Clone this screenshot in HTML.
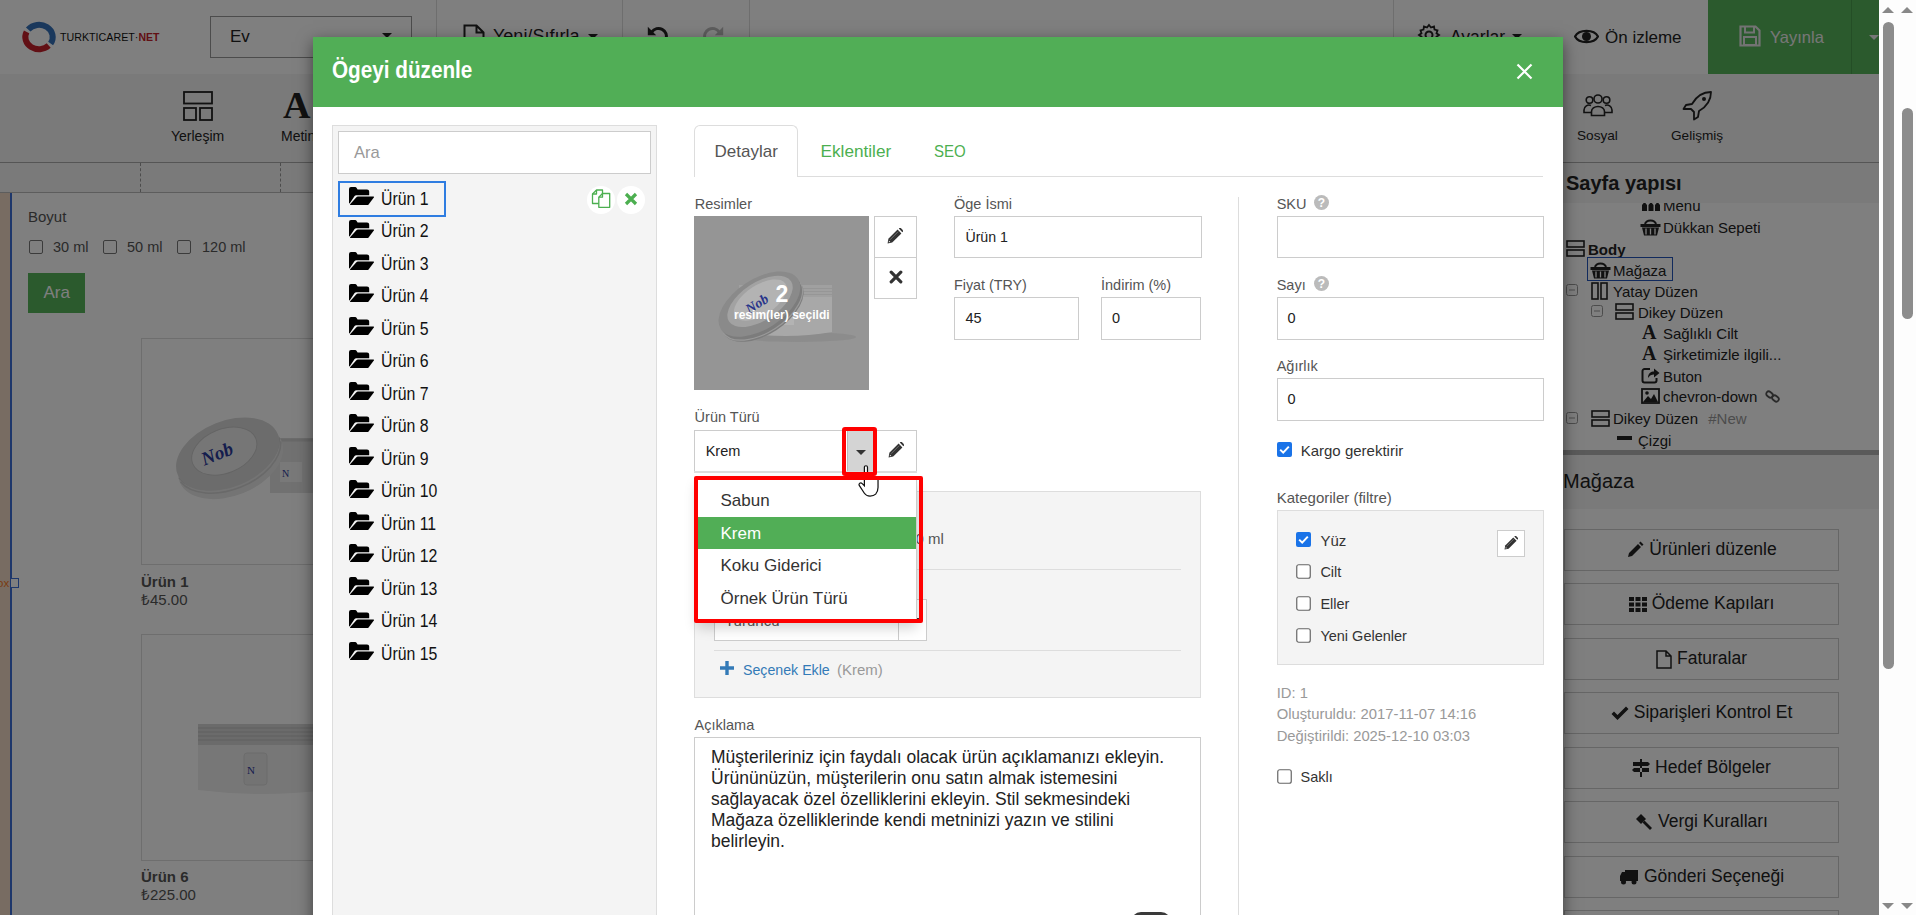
<!DOCTYPE html>
<html><head><meta charset="utf-8">
<style>
*{box-sizing:border-box;margin:0;padding:0}
html,body{width:1916px;height:915px;overflow:hidden;background:#fff;font-family:"Liberation Sans",sans-serif;color:#333}
.a{position:absolute}
.tx{line-height:1;white-space:nowrap}
svg{display:block}
</style></head><body>
<div class="a" style="left:0;top:0;width:1879px;height:915px;background:#fff;overflow:hidden">
<div class="a" style="left:0px;top:0px;width:1879px;height:74px;background:#fff"></div>
<div class="a" style="left:0px;top:74px;width:1879px;height:88px;background:#f4f4f4"></div>
<div class="a" style="left:0px;top:162px;width:1879px;height:1px;background:#aaa"></div>
<div class="a" style="left:0px;top:163px;width:1879px;height:29px;background:#f4f4f4"></div>
<div class="a" style="left:0px;top:192px;width:1879px;height:1px;background:#bbb"></div>
<div class="a" style="left:140px;top:163px;width:0px;height:29px;border-left:1px dashed #999"></div>
<div class="a" style="left:280px;top:163px;width:0px;height:29px;border-left:1px dashed #999"></div>
<svg class="a" style="left:18px;top:18px;" width="42" height="40" viewBox="0 0 42 40"><path d="M10.2 11.5 A13.7 12.2 0 0 1 32.6 25.5" fill="none" stroke="#3470b8" stroke-width="6"/><path d="M8.6 13.8 A13.7 12.2 0 0 0 30.7 27.6" fill="none" stroke="#c4202a" stroke-width="6"/></svg>
<div class="a tx" style="left:60px;top:31.9px;font-size:10.7px;color:#111;">TURKTICARET·<span style="color:#c4202a;font-weight:bold;font-size:10.5px">NET</span></div>
<div class="a" style="left:210px;top:16px;width:202px;height:42px;border:1px solid #999;background:#fff"></div>
<div class="a tx" style="left:230px;top:28.2px;font-size:17px;color:#222;">Ev</div>
<div class="a" style="left:382px;top:33px;width:0px;height:0px;border-left:5px solid transparent;border-right:5px solid transparent;border-top:5px solid #222"></div>
<div class="a" style="left:436px;top:0px;width:1px;height:74px;background:#ddd"></div>
<svg class="a" style="left:463px;top:24px;" width="22" height="26" viewBox="0 0 22 26"><path d="M1.5 1.5h12l7 7v16h-19z M13.5 1.5v7h7" fill="none" stroke="#222" stroke-width="2"/></svg>
<div class="a tx" style="left:493px;top:26.8px;font-size:18px;color:#222;">Yeni/Sıfırla</div>
<div class="a" style="left:588px;top:34px;width:0px;height:0px;border-left:5px solid transparent;border-right:5px solid transparent;border-top:5px solid #222"></div>
<div class="a" style="left:622px;top:0px;width:1px;height:74px;background:#ddd"></div>
<svg class="a" style="left:646px;top:24px;" width="24" height="24" viewBox="0 0 24 24"><path d="M5.9 7.9 A8 8 0 0 1 20 15.2" fill="none" stroke="#222" stroke-width="3"/><path d="M1.8 2.8 L1.8 11.2 L10.2 11.2z" fill="#222"/></svg>
<svg class="a" style="left:701px;top:24px;" width="24" height="24" viewBox="0 0 24 24"><path d="M18.1 7.9 A8 8 0 0 0 4 15.2" fill="none" stroke="#bbb" stroke-width="3"/><path d="M22.2 2.8 L22.2 11.2 L13.8 11.2z" fill="#bbb"/></svg>
<div class="a" style="left:749px;top:0px;width:1px;height:74px;background:#ddd"></div>
<div class="a" style="left:1393px;top:0px;width:1px;height:74px;background:#ddd"></div>
<svg class="a" style="left:1417px;top:23px;" width="24" height="24" viewBox="0 0 24 24"><circle cx="12" cy="12" r="3.5" fill="none" stroke="#222" stroke-width="2"/><path d="M12 2l2 2.5 3-1 .5 3 3 .8-1 3 2.5 1.7-2.5 1.7 1 3-3 .8-.5 3-3-1L12 22l-2-2.5-3 1-.5-3-3-.8 1-3L2 12l2.5-1.7-1-3 3-.8.5-3 3 1z" fill="none" stroke="#222" stroke-width="1.8"/></svg>
<div class="a tx" style="left:1450px;top:28.6px;font-size:17.5px;color:#222;">Ayarlar</div>
<div class="a" style="left:1512px;top:34px;width:0px;height:0px;border-left:5px solid transparent;border-right:5px solid transparent;border-top:5px solid #222"></div>
<svg class="a" style="left:1574px;top:28px;" width="25" height="17" viewBox="0 0 25 17"><path d="M1 8.5 C5 1 20 1 24 8.5 C20 16 5 16 1 8.5z" fill="none" stroke="#222" stroke-width="2.2"/><circle cx="12.5" cy="8.5" r="4.5" fill="#222"/></svg>
<div class="a tx" style="left:1605px;top:29.0px;font-size:17px;color:#222;">Ön izleme</div>
<div class="a" style="left:1708px;top:0px;width:171px;height:74px;background:#56b45b"></div>
<div class="a" style="left:1851px;top:0px;width:1px;height:74px;background:#489c4c"></div>
<svg class="a" style="left:1739px;top:25px;" width="22" height="22" viewBox="0 0 22 22"><path d="M1.5 1.5h15l4 4v15h-19z" fill="none" stroke="#e6e6e6" stroke-width="2.2"/><path d="M6 1.5v6h9v-6" fill="none" stroke="#e6e6e6" stroke-width="2"/><rect x="5" y="12" width="12" height="8" fill="none" stroke="#e6e6e6" stroke-width="2"/></svg>
<div class="a tx" style="left:1770px;top:29.4px;font-size:16.5px;color:#eee;">Yayınla</div>
<div class="a" style="left:1869px;top:35px;width:0px;height:0px;border-left:5px solid transparent;border-right:5px solid transparent;border-top:5px solid #eee"></div>
<svg class="a" style="left:183px;top:91px;" width="30" height="30" viewBox="0 0 30 30"><rect x="1" y="1" width="28" height="11.5" fill="none" stroke="#222" stroke-width="1.8"/><rect x="1" y="17" width="12" height="12" fill="none" stroke="#222" stroke-width="1.8"/><rect x="17" y="17" width="12" height="12" fill="none" stroke="#222" stroke-width="1.8"/></svg>
<div class="a tx" style="left:171px;top:129.1px;font-size:14px;color:#222;">Yerleşim</div>
<div class="a tx" style="left:283px;top:85.8px;font-size:38px;color:#222;font-weight:bold;font-family:'Liberation Serif',serif;">A</div>
<div class="a tx" style="left:281px;top:129.1px;font-size:14px;color:#222;">Metin</div>
<svg class="a" style="left:1583px;top:93px;" width="30" height="24" viewBox="0 0 30 24"><g fill="none" stroke="#222" stroke-width="1.6"><circle cx="15" cy="6" r="4"/><circle cx="6.5" cy="7" r="3.3"/><circle cx="23.5" cy="7" r="3.3"/><path d="M8.5 22.5v-4a6.5 5 0 0 1 13 0v4z"/><path d="M8 12.5a5 5 0 0 0-7 4.5v2.5h7"/><path d="M22 12.5a5 5 0 0 1 7 4.5v2.5h-7"/></g></svg>
<div class="a tx" style="left:1577px;top:129.2px;font-size:13.6px;color:#222;">Sosyal</div>
<svg class="a" style="left:1682px;top:90px;" width="31" height="31" viewBox="0 0 31 31"><g fill="none" stroke="#222" stroke-width="1.8" stroke-linejoin="round"><path d="M29 2 C20 2 14 7 10 14 L4 15 L1.5 19 L9 19 L12 22 L12 29.5 L16 27 L17 21 C24 17 29 11 29 2z"/></g><circle cx="22" cy="9" r="2" fill="#222"/></svg>
<div class="a tx" style="left:1671px;top:129.2px;font-size:13.6px;color:#222;">Gelişmiş</div>
<div class="a" style="left:0px;top:193px;width:10px;height:722px;background:#f0d9c4"></div>
<div class="a" style="left:10px;top:193px;width:2px;height:722px;background:#3d6fd6"></div>
<div class="a tx" style="left:28px;top:209.3px;font-size:15px;color:#555;">Boyut</div>
<div class="a" style="left:29px;top:240px;width:14px;height:14px;border:1px solid #777;border-radius:2px;background:#fff"></div>
<div class="a tx" style="left:53px;top:240.2px;font-size:14.5px;color:#555;">30 ml</div>
<div class="a" style="left:103px;top:240px;width:14px;height:14px;border:1px solid #777;border-radius:2px;background:#fff"></div>
<div class="a tx" style="left:127px;top:240.2px;font-size:14.5px;color:#555;">50 ml</div>
<div class="a" style="left:177px;top:240px;width:14px;height:14px;border:1px solid #777;border-radius:2px;background:#fff"></div>
<div class="a tx" style="left:202px;top:240.2px;font-size:14.5px;color:#555;">120 ml</div>
<div class="a" style="left:28px;top:273px;width:57px;height:40px;background:#56b45b"></div>
<div class="a tx" style="left:43.5px;top:284.3px;font-size:17px;color:#fff;">Ara</div>
<div class="a" style="left:141px;top:338px;width:300px;height:227px;border:1px solid #ddd"></div>
<div class="a tx" style="left:141px;top:574.3px;font-size:15px;color:#555;font-weight:bold;">Ürün 1</div>
<div class="a tx" style="left:141px;top:591.9px;font-size:15px;color:#555;">₺45.00</div>
<div class="a" style="left:141px;top:634px;width:300px;height:227px;border:1px solid #ddd"></div>
<div class="a tx" style="left:141px;top:869.3px;font-size:15px;color:#555;font-weight:bold;">Ürün 6</div>
<div class="a tx" style="left:141px;top:887.3px;font-size:15px;color:#555;">₺225.00</div>
<div class="a tx" style="left:-3px;top:578.3px;font-size:11.5px;color:#f5761f;">ox</div>
<div class="a" style="left:10px;top:578px;width:9px;height:10px;border:1px solid #3d6fd6;background:#fff"></div>
<svg class="a" style="left:160px;top:400px;" width="160" height="110" viewBox="0 0 160 110"><rect x="110" y="38" width="50" height="55" fill="#e2e2e2"/><path d="M110 40 H160" stroke="#d0d0d0" stroke-width="3"/><rect x="120" y="62" width="22" height="20" fill="#f2f2f2"/><text x="122" y="77" font-family="Liberation Serif" font-size="10" fill="#2b3a9a">N</text><g transform="rotate(-22 68 55)"><ellipse cx="68" cy="62" rx="55" ry="34" fill="#e8e8e8"/><path d="M14 58 A55 34 0 0 0 122 58" fill="none" stroke="#cfcfcf" stroke-width="1.5"/><path d="M14 62 A55 34 0 0 0 122 62" fill="none" stroke="#d2d2d2" stroke-width="1.5"/><ellipse cx="68" cy="54" rx="54" ry="33" fill="#d9d9d9"/><ellipse cx="66" cy="50" rx="34" ry="22" fill="#ededed" stroke="#c9c9c9" stroke-width="1"/><text x="42" y="56" font-family="Liberation Serif" font-style="italic" font-weight="bold" font-size="19" fill="#2b3a9a">Nob</text></g></svg>
<svg class="a" style="left:196px;top:722px;" width="130" height="76" viewBox="0 0 130 76"><rect x="2" y="2" width="128" height="21" fill="#d6d6d6"/><path d="M2 6H130M2 10H130M2 14H130M2 18H130" stroke="#bdbdbd" stroke-width="1.2"/><path d="M2 23 H130 V68 Q66 76 2 68z" fill="#eeeeee"/><rect x="48" y="31" width="23" height="32" rx="3" fill="#e6e6e6" stroke="#d8d8d8"/><text x="51" y="52" font-family="Liberation Serif" font-size="11" fill="#2b3a9a">N</text></svg>
<div class="a" style="left:1545px;top:163px;width:334px;height:40px;background:#f4f4f4"></div>
<div class="a tx" style="left:1566px;top:172.9px;font-size:20px;color:#222;font-weight:bold;">Sayfa yapısı</div>
<div class="a" style="left:1545px;top:203px;width:334px;height:247px;overflow:hidden"><div class="a" style="left:-1545px;top:-203px;width:1879px;height:915px"><svg class="a" style="left:1641px;top:199px;" width="20" height="12" viewBox="0 0 20 12"><path d="M1 12v-6l2.5-3 2.5 3v6z M7.5 12v-6l2.5-3 2.5 3v6z M14 12v-6l2.5-3 2.5 3v6z" fill="#222"/></svg>
<div class="a tx" style="left:1663px;top:198.3px;font-size:15px;color:#222;">Menu</div>
<svg class="a" style="left:1640px;top:217px;" width="21" height="19" viewBox="0 0 21 19"><path d="M5 8 C5 2 16 2 16 8" fill="none" stroke="#222" stroke-width="2"/><rect x="0.5" y="7" width="20" height="3" fill="#222"/><path d="M2 10.5h17l-2 8h-13z" fill="#222"/><path d="M6 11.5v6 M10.5 11.5v6 M15 11.5v6" stroke="#fff" stroke-width="1.3"/></svg>
<div class="a tx" style="left:1663px;top:219.5px;font-size:15px;color:#222;">Dükkan Sepeti</div>
<svg class="a" style="left:1566px;top:240px;" width="19" height="17" viewBox="0 0 19 17"><rect x="1" y="1" width="17" height="6" fill="none" stroke="#222" stroke-width="1.6"/><rect x="1" y="10" width="17" height="6" fill="none" stroke="#222" stroke-width="1.6"/></svg>
<div class="a tx" style="left:1588px;top:241.5px;font-size:15px;color:#222;font-weight:bold;">Body</div>
<div class="a" style="left:1587px;top:257px;width:86px;height:24px;border:1.5px solid #2255bb"></div>
<svg class="a" style="left:1590px;top:260px;" width="21" height="19" viewBox="0 0 21 19"><path d="M5 8 C5 2 16 2 16 8" fill="none" stroke="#222" stroke-width="2"/><rect x="0.5" y="7" width="20" height="3" fill="#222"/><path d="M2 10.5h17l-2 8h-13z" fill="#222"/><path d="M6 11.5v6 M10.5 11.5v6 M15 11.5v6" stroke="#fff" stroke-width="1.3"/></svg>
<div class="a tx" style="left:1613px;top:262.8px;font-size:15px;color:#222;">Mağaza</div>
<svg class="a" style="left:1566px;top:284px;" width="12" height="12" viewBox="0 0 12 12"><rect x="0.5" y="0.5" width="11" height="11" rx="2" fill="none" stroke="#999" stroke-width="1"/><path d="M3 6h6" stroke="#999" stroke-width="1"/></svg>
<svg class="a" style="left:1591px;top:282px;" width="17" height="18" viewBox="0 0 17 18"><rect x="1" y="1" width="6" height="16" fill="none" stroke="#222" stroke-width="1.6"/><rect x="10" y="1" width="6" height="16" fill="none" stroke="#222" stroke-width="1.6"/></svg>
<div class="a tx" style="left:1613px;top:283.5px;font-size:15px;color:#222;">Yatay Düzen</div>
<svg class="a" style="left:1591px;top:305px;" width="12" height="12" viewBox="0 0 12 12"><rect x="0.5" y="0.5" width="11" height="11" rx="2" fill="none" stroke="#999" stroke-width="1"/><path d="M3 6h6" stroke="#999" stroke-width="1"/></svg>
<svg class="a" style="left:1615px;top:303px;" width="19" height="17" viewBox="0 0 19 17"><rect x="1" y="1" width="17" height="6" fill="none" stroke="#222" stroke-width="1.6"/><rect x="1" y="10" width="17" height="6" fill="none" stroke="#222" stroke-width="1.6"/></svg>
<div class="a tx" style="left:1638px;top:304.8px;font-size:15px;color:#222;">Dikey Düzen</div>
<div class="a tx" style="left:1642px;top:321.9px;font-size:20px;color:#222;font-weight:bold;font-family:'Liberation Serif',serif;">A</div>
<div class="a tx" style="left:1663px;top:326.1px;font-size:15px;color:#222;">Sağlıklı Cilt</div>
<div class="a tx" style="left:1642px;top:343.1px;font-size:20px;color:#222;font-weight:bold;font-family:'Liberation Serif',serif;">A</div>
<div class="a tx" style="left:1663px;top:347.3px;font-size:15px;color:#222;">Şirketimizle ilgili...</div>
<svg class="a" style="left:1641px;top:366px;" width="19" height="18" viewBox="0 0 19 18"><path d="M9 3H3.5a2 2 0 0 0-2 2v9.5a2 2 0 0 0 2 2h10a2 2 0 0 0 2-2V12" fill="none" stroke="#222" stroke-width="2"/><path d="M7 12 C7 7 10 5.5 13 5.5 V2.5 L18.5 7 L13 11.5 V8.5 C10.5 8.5 8.5 9.5 7 12z" fill="#222"/></svg>
<div class="a tx" style="left:1663px;top:368.8px;font-size:15px;color:#222;">Buton</div>
<svg class="a" style="left:1641px;top:388px;" width="19" height="16" viewBox="0 0 19 16"><rect x="1" y="1" width="17" height="14" fill="none" stroke="#222" stroke-width="1.8"/><path d="M2 14 L7 8 L10 11 L13 6 L17 14z" fill="#222"/><circle cx="6" cy="5" r="1.8" fill="#222"/></svg>
<div class="a tx" style="left:1663px;top:389.3px;font-size:15px;color:#222;">chevron-down</div>
<svg class="a" style="left:1765px;top:389px;" width="15" height="15" viewBox="0 0 15 15"><g fill="none" stroke="#555" stroke-width="1.8"><rect x="1" y="3" width="7" height="5" rx="2.5" transform="rotate(40 4.5 5.5)"/><rect x="7" y="7" width="7" height="5" rx="2.5" transform="rotate(40 10.5 9.5)"/></g></svg>
<svg class="a" style="left:1566px;top:412px;" width="12" height="12" viewBox="0 0 12 12"><rect x="0.5" y="0.5" width="11" height="11" rx="2" fill="none" stroke="#999" stroke-width="1"/><path d="M3 6h6" stroke="#999" stroke-width="1"/></svg>
<svg class="a" style="left:1591px;top:410px;" width="19" height="17" viewBox="0 0 19 17"><rect x="1" y="1" width="17" height="6" fill="none" stroke="#222" stroke-width="1.6"/><rect x="1" y="10" width="17" height="6" fill="none" stroke="#222" stroke-width="1.6"/></svg>
<div class="a tx" style="left:1613px;top:411.4px;font-size:15px;color:#222;">Dikey Düzen <span style="color:#999;margin-left:6px">#New</span></div>
<div class="a" style="left:1617px;top:436px;width:15px;height:4px;background:#222"></div>
<div class="a tx" style="left:1638px;top:432.7px;font-size:15px;color:#222;">Çizgi</div>
</div></div>
<div class="a" style="left:1545px;top:450px;width:334px;height:5px;background:#b5b5b5"></div>
<div class="a" style="left:1545px;top:455px;width:334px;height:54px;background:#f4f4f4"></div>
<div class="a tx" style="left:1563px;top:471.1px;font-size:20px;color:#222;">Mağaza</div>
<div class="a" style="left:1564px;top:529px;width:275px;height:42px;border:1px solid #ccc;background:#fff;display:flex;align-items:center;justify-content:center;gap:5px;font-size:17.5px;color:#222;line-height:1"><svg width="18" height="18" viewBox="0 0 18 18"><path d="M2 16 L3 12 L12 3 L15 6 L6 15z M13 2 L14.5 0.5 L17.5 3.5 L16 5z" fill="#222"/></svg><span>Ürünleri düzenle</span></div>
<div class="a" style="left:1564px;top:583px;width:275px;height:42px;border:1px solid #ccc;background:#fff;display:flex;align-items:center;justify-content:center;gap:5px;font-size:17.5px;color:#222;line-height:1"><svg width="18" height="16" viewBox="0 0 18 16"><path d="M0 1h5v4h-5z M6.5 1h5v4h-5z M13 1h5v4h-5z M0 6.5h5v4h-5z M6.5 6.5h5v4h-5z M13 6.5h5v4h-5z M0 12h5v4h-5z M6.5 12h5v4h-5z M13 12h5v4h-5z" fill="#222"/></svg><span>Ödeme Kapıları</span></div>
<div class="a" style="left:1564px;top:638px;width:275px;height:42px;border:1px solid #ccc;background:#fff;display:flex;align-items:center;justify-content:center;gap:5px;font-size:17.5px;color:#222;line-height:1"><svg width="16" height="19" viewBox="0 0 16 19"><path d="M1 1h9l5 5v12h-14z M10 1v5h5" fill="none" stroke="#222" stroke-width="1.5"/></svg><span>Faturalar</span></div>
<div class="a" style="left:1564px;top:692px;width:275px;height:42px;border:1px solid #ccc;background:#fff;display:flex;align-items:center;justify-content:center;gap:5px;font-size:17.5px;color:#222;line-height:1"><svg width="18" height="15" viewBox="0 0 18 15"><path d="M0.5 8 L3 5.5 L6.5 9 L15 0.5 L17.5 3 L6.5 14z" fill="#222"/></svg><span>Siparişleri Kontrol Et</span></div>
<div class="a" style="left:1564px;top:747px;width:275px;height:42px;border:1px solid #ccc;background:#fff;display:flex;align-items:center;justify-content:center;gap:5px;font-size:17.5px;color:#222;line-height:1"><svg width="18" height="18" viewBox="0 0 18 18"><path d="M8 0h2v18h-2z M1 3h15l2 2-2 2h-15z M17 9h-15l-2 2 2 2h15z" fill="#222"/></svg><span>Hedef Bölgeler</span></div>
<div class="a" style="left:1564px;top:801px;width:275px;height:42px;border:1px solid #ccc;background:#fff;display:flex;align-items:center;justify-content:center;gap:5px;font-size:17.5px;color:#222;line-height:1"><svg width="18" height="18" viewBox="0 0 18 18"><path d="M1 6 L6 1 L11 6 L6 11z" fill="#222"/><path d="M7.5 9.5 L9.5 7.5 L17 15 L15 17z" fill="#222"/></svg><span>Vergi Kuralları</span></div>
<div class="a" style="left:1564px;top:856px;width:275px;height:42px;border:1px solid #ccc;background:#fff;display:flex;align-items:center;justify-content:center;gap:5px;font-size:17.5px;color:#222;line-height:1"><svg width="20" height="16" viewBox="0 0 20 16"><path d="M6 1h13v11h-13z M1 7l2-4h3v9h-5z" fill="#222"/><circle cx="4.5" cy="13" r="2.5" fill="#222"/><circle cx="15" cy="13" r="2.5" fill="#222"/></svg><span>Gönderi Seçeneği</span></div>
<div class="a" style="left:1564px;top:910px;width:275px;height:42px;border:1px solid #ccc;background:#fff;display:flex;align-items:center;justify-content:center;gap:5px;font-size:17.5px;color:#222;line-height:1"><span></span></div>
</div>
<div class="a" style="left:0px;top:0px;width:1879px;height:915px;background:rgba(0,0,0,.5)"></div>
<div class="a" style="left:1879px;top:0px;width:37px;height:915px;background:#fdfdfd"></div>
<div class="a" style="left:1882px;top:7px;width:0px;height:0px;border-left:6px solid transparent;border-right:6px solid transparent;border-bottom:6px solid #888"></div>
<div class="a" style="left:1901px;top:7px;width:0px;height:0px;border-left:6px solid transparent;border-right:6px solid transparent;border-bottom:6px solid #888"></div>
<div class="a" style="left:1882px;top:903px;width:0px;height:0px;border-left:6px solid transparent;border-right:6px solid transparent;border-top:6px solid #888"></div>
<div class="a" style="left:1901px;top:903px;width:0px;height:0px;border-left:6px solid transparent;border-right:6px solid transparent;border-top:6px solid #888"></div>
<div class="a" style="left:1883px;top:22px;width:11px;height:647px;background:#8c8c8c;border-radius:6px"></div>
<div class="a" style="left:1902px;top:108px;width:11px;height:211px;background:#8c8c8c;border-radius:6px"></div>
<div class="a" style="left:313px;top:37px;width:1250px;height:900px;background:#fff;box-shadow:0 5px 15px rgba(0,0,0,.5)"></div>
<div class="a" style="left:313px;top:37px;width:1250px;height:70px;background:#51ae56"></div>
<div class="a tx" style="left:332px;top:59.1px;font-size:23px;color:#fff;font-weight:bold;transform:scaleX(.9);transform-origin:0 0">Ögeyi düzenle</div>
<svg class="a" style="left:1516px;top:63px;" width="17" height="17" viewBox="0 0 17 17"><path d="M1.5 1.5L15.5 15.5M15.5 1.5L1.5 15.5" stroke="#fff" stroke-width="2.2"/></svg>
<div class="a" style="left:332px;top:125px;width:325px;height:800px;background:#f4f4f4;border:1px solid #ddd"></div>
<div class="a" style="left:338px;top:131px;width:313px;height:43px;background:#fff;border:1px solid #ccc"></div>
<div class="a tx" style="left:354px;top:144.9px;font-size:16.6px;color:#999;">Ara</div>
<div class="a" style="left:338px;top:181px;width:108px;height:36px;border:2px solid #2f7de1"></div>
<svg class="a" style="left:349px;top:187px;" width="26" height="18" viewBox="0 0 26 18"><path d="M0 2 Q0 0 2 0 H6.2 Q7 0 7.5 0.7 L8.6 2.4 H18 Q20.2 2.4 20.2 4.6 V8.2 H7.2 Q6.2 8.2 5.6 9 L0.6 16.6 Q0 16.2 0 15.4z" fill="#000"/><path d="M7.6 10 Q8.1 9.6 8.8 9.6 H24.3 Q25.4 9.6 24.8 10.5 L19.6 17.4 Q19.1 18 18.3 18 H1.4 Q0.7 18 1.1 17.3z" fill="#000"/></svg>
<div class="a tx" style="left:380.5px;top:190.6px;font-size:17.6px;color:#111;transform:scaleX(.9);transform-origin:0 0">Ürün 1</div>
<svg class="a" style="left:349px;top:220px;" width="26" height="18" viewBox="0 0 26 18"><path d="M0 2 Q0 0 2 0 H6.2 Q7 0 7.5 0.7 L8.6 2.4 H18 Q20.2 2.4 20.2 4.6 V8.2 H7.2 Q6.2 8.2 5.6 9 L0.6 16.6 Q0 16.2 0 15.4z" fill="#000"/><path d="M7.6 10 Q8.1 9.6 8.8 9.6 H24.3 Q25.4 9.6 24.8 10.5 L19.6 17.4 Q19.1 18 18.3 18 H1.4 Q0.7 18 1.1 17.3z" fill="#000"/></svg>
<div class="a tx" style="left:380.5px;top:223.1px;font-size:17.6px;color:#111;transform:scaleX(.9);transform-origin:0 0">Ürün 2</div>
<svg class="a" style="left:349px;top:252px;" width="26" height="18" viewBox="0 0 26 18"><path d="M0 2 Q0 0 2 0 H6.2 Q7 0 7.5 0.7 L8.6 2.4 H18 Q20.2 2.4 20.2 4.6 V8.2 H7.2 Q6.2 8.2 5.6 9 L0.6 16.6 Q0 16.2 0 15.4z" fill="#000"/><path d="M7.6 10 Q8.1 9.6 8.8 9.6 H24.3 Q25.4 9.6 24.8 10.5 L19.6 17.4 Q19.1 18 18.3 18 H1.4 Q0.7 18 1.1 17.3z" fill="#000"/></svg>
<div class="a tx" style="left:380.5px;top:255.6px;font-size:17.6px;color:#111;transform:scaleX(.9);transform-origin:0 0">Ürün 3</div>
<svg class="a" style="left:349px;top:284px;" width="26" height="18" viewBox="0 0 26 18"><path d="M0 2 Q0 0 2 0 H6.2 Q7 0 7.5 0.7 L8.6 2.4 H18 Q20.2 2.4 20.2 4.6 V8.2 H7.2 Q6.2 8.2 5.6 9 L0.6 16.6 Q0 16.2 0 15.4z" fill="#000"/><path d="M7.6 10 Q8.1 9.6 8.8 9.6 H24.3 Q25.4 9.6 24.8 10.5 L19.6 17.4 Q19.1 18 18.3 18 H1.4 Q0.7 18 1.1 17.3z" fill="#000"/></svg>
<div class="a tx" style="left:380.5px;top:288.1px;font-size:17.6px;color:#111;transform:scaleX(.9);transform-origin:0 0">Ürün 4</div>
<svg class="a" style="left:349px;top:317px;" width="26" height="18" viewBox="0 0 26 18"><path d="M0 2 Q0 0 2 0 H6.2 Q7 0 7.5 0.7 L8.6 2.4 H18 Q20.2 2.4 20.2 4.6 V8.2 H7.2 Q6.2 8.2 5.6 9 L0.6 16.6 Q0 16.2 0 15.4z" fill="#000"/><path d="M7.6 10 Q8.1 9.6 8.8 9.6 H24.3 Q25.4 9.6 24.8 10.5 L19.6 17.4 Q19.1 18 18.3 18 H1.4 Q0.7 18 1.1 17.3z" fill="#000"/></svg>
<div class="a tx" style="left:380.5px;top:320.6px;font-size:17.6px;color:#111;transform:scaleX(.9);transform-origin:0 0">Ürün 5</div>
<svg class="a" style="left:349px;top:350px;" width="26" height="18" viewBox="0 0 26 18"><path d="M0 2 Q0 0 2 0 H6.2 Q7 0 7.5 0.7 L8.6 2.4 H18 Q20.2 2.4 20.2 4.6 V8.2 H7.2 Q6.2 8.2 5.6 9 L0.6 16.6 Q0 16.2 0 15.4z" fill="#000"/><path d="M7.6 10 Q8.1 9.6 8.8 9.6 H24.3 Q25.4 9.6 24.8 10.5 L19.6 17.4 Q19.1 18 18.3 18 H1.4 Q0.7 18 1.1 17.3z" fill="#000"/></svg>
<div class="a tx" style="left:380.5px;top:353.1px;font-size:17.6px;color:#111;transform:scaleX(.9);transform-origin:0 0">Ürün 6</div>
<svg class="a" style="left:349px;top:382px;" width="26" height="18" viewBox="0 0 26 18"><path d="M0 2 Q0 0 2 0 H6.2 Q7 0 7.5 0.7 L8.6 2.4 H18 Q20.2 2.4 20.2 4.6 V8.2 H7.2 Q6.2 8.2 5.6 9 L0.6 16.6 Q0 16.2 0 15.4z" fill="#000"/><path d="M7.6 10 Q8.1 9.6 8.8 9.6 H24.3 Q25.4 9.6 24.8 10.5 L19.6 17.4 Q19.1 18 18.3 18 H1.4 Q0.7 18 1.1 17.3z" fill="#000"/></svg>
<div class="a tx" style="left:380.5px;top:385.6px;font-size:17.6px;color:#111;transform:scaleX(.9);transform-origin:0 0">Ürün 7</div>
<svg class="a" style="left:349px;top:414px;" width="26" height="18" viewBox="0 0 26 18"><path d="M0 2 Q0 0 2 0 H6.2 Q7 0 7.5 0.7 L8.6 2.4 H18 Q20.2 2.4 20.2 4.6 V8.2 H7.2 Q6.2 8.2 5.6 9 L0.6 16.6 Q0 16.2 0 15.4z" fill="#000"/><path d="M7.6 10 Q8.1 9.6 8.8 9.6 H24.3 Q25.4 9.6 24.8 10.5 L19.6 17.4 Q19.1 18 18.3 18 H1.4 Q0.7 18 1.1 17.3z" fill="#000"/></svg>
<div class="a tx" style="left:380.5px;top:418.1px;font-size:17.6px;color:#111;transform:scaleX(.9);transform-origin:0 0">Ürün 8</div>
<svg class="a" style="left:349px;top:447px;" width="26" height="18" viewBox="0 0 26 18"><path d="M0 2 Q0 0 2 0 H6.2 Q7 0 7.5 0.7 L8.6 2.4 H18 Q20.2 2.4 20.2 4.6 V8.2 H7.2 Q6.2 8.2 5.6 9 L0.6 16.6 Q0 16.2 0 15.4z" fill="#000"/><path d="M7.6 10 Q8.1 9.6 8.8 9.6 H24.3 Q25.4 9.6 24.8 10.5 L19.6 17.4 Q19.1 18 18.3 18 H1.4 Q0.7 18 1.1 17.3z" fill="#000"/></svg>
<div class="a tx" style="left:380.5px;top:450.6px;font-size:17.6px;color:#111;transform:scaleX(.9);transform-origin:0 0">Ürün 9</div>
<svg class="a" style="left:349px;top:480px;" width="26" height="18" viewBox="0 0 26 18"><path d="M0 2 Q0 0 2 0 H6.2 Q7 0 7.5 0.7 L8.6 2.4 H18 Q20.2 2.4 20.2 4.6 V8.2 H7.2 Q6.2 8.2 5.6 9 L0.6 16.6 Q0 16.2 0 15.4z" fill="#000"/><path d="M7.6 10 Q8.1 9.6 8.8 9.6 H24.3 Q25.4 9.6 24.8 10.5 L19.6 17.4 Q19.1 18 18.3 18 H1.4 Q0.7 18 1.1 17.3z" fill="#000"/></svg>
<div class="a tx" style="left:380.5px;top:483.1px;font-size:17.6px;color:#111;transform:scaleX(.9);transform-origin:0 0">Ürün 10</div>
<svg class="a" style="left:349px;top:512px;" width="26" height="18" viewBox="0 0 26 18"><path d="M0 2 Q0 0 2 0 H6.2 Q7 0 7.5 0.7 L8.6 2.4 H18 Q20.2 2.4 20.2 4.6 V8.2 H7.2 Q6.2 8.2 5.6 9 L0.6 16.6 Q0 16.2 0 15.4z" fill="#000"/><path d="M7.6 10 Q8.1 9.6 8.8 9.6 H24.3 Q25.4 9.6 24.8 10.5 L19.6 17.4 Q19.1 18 18.3 18 H1.4 Q0.7 18 1.1 17.3z" fill="#000"/></svg>
<div class="a tx" style="left:380.5px;top:515.6px;font-size:17.6px;color:#111;transform:scaleX(.9);transform-origin:0 0">Ürün 11</div>
<svg class="a" style="left:349px;top:544px;" width="26" height="18" viewBox="0 0 26 18"><path d="M0 2 Q0 0 2 0 H6.2 Q7 0 7.5 0.7 L8.6 2.4 H18 Q20.2 2.4 20.2 4.6 V8.2 H7.2 Q6.2 8.2 5.6 9 L0.6 16.6 Q0 16.2 0 15.4z" fill="#000"/><path d="M7.6 10 Q8.1 9.6 8.8 9.6 H24.3 Q25.4 9.6 24.8 10.5 L19.6 17.4 Q19.1 18 18.3 18 H1.4 Q0.7 18 1.1 17.3z" fill="#000"/></svg>
<div class="a tx" style="left:380.5px;top:548.1px;font-size:17.6px;color:#111;transform:scaleX(.9);transform-origin:0 0">Ürün 12</div>
<svg class="a" style="left:349px;top:577px;" width="26" height="18" viewBox="0 0 26 18"><path d="M0 2 Q0 0 2 0 H6.2 Q7 0 7.5 0.7 L8.6 2.4 H18 Q20.2 2.4 20.2 4.6 V8.2 H7.2 Q6.2 8.2 5.6 9 L0.6 16.6 Q0 16.2 0 15.4z" fill="#000"/><path d="M7.6 10 Q8.1 9.6 8.8 9.6 H24.3 Q25.4 9.6 24.8 10.5 L19.6 17.4 Q19.1 18 18.3 18 H1.4 Q0.7 18 1.1 17.3z" fill="#000"/></svg>
<div class="a tx" style="left:380.5px;top:580.6px;font-size:17.6px;color:#111;transform:scaleX(.9);transform-origin:0 0">Ürün 13</div>
<svg class="a" style="left:349px;top:610px;" width="26" height="18" viewBox="0 0 26 18"><path d="M0 2 Q0 0 2 0 H6.2 Q7 0 7.5 0.7 L8.6 2.4 H18 Q20.2 2.4 20.2 4.6 V8.2 H7.2 Q6.2 8.2 5.6 9 L0.6 16.6 Q0 16.2 0 15.4z" fill="#000"/><path d="M7.6 10 Q8.1 9.6 8.8 9.6 H24.3 Q25.4 9.6 24.8 10.5 L19.6 17.4 Q19.1 18 18.3 18 H1.4 Q0.7 18 1.1 17.3z" fill="#000"/></svg>
<div class="a tx" style="left:380.5px;top:613.1px;font-size:17.6px;color:#111;transform:scaleX(.9);transform-origin:0 0">Ürün 14</div>
<svg class="a" style="left:349px;top:642px;" width="26" height="18" viewBox="0 0 26 18"><path d="M0 2 Q0 0 2 0 H6.2 Q7 0 7.5 0.7 L8.6 2.4 H18 Q20.2 2.4 20.2 4.6 V8.2 H7.2 Q6.2 8.2 5.6 9 L0.6 16.6 Q0 16.2 0 15.4z" fill="#000"/><path d="M7.6 10 Q8.1 9.6 8.8 9.6 H24.3 Q25.4 9.6 24.8 10.5 L19.6 17.4 Q19.1 18 18.3 18 H1.4 Q0.7 18 1.1 17.3z" fill="#000"/></svg>
<div class="a tx" style="left:380.5px;top:645.6px;font-size:17.6px;color:#111;transform:scaleX(.9);transform-origin:0 0">Ürün 15</div>
<div class="a" style="left:587px;top:186px;width:28px;height:28px;background:#fff;border-radius:50%"></div>
<div class="a" style="left:617px;top:186px;width:28px;height:28px;background:#fff;border-radius:50%"></div>
<svg class="a" style="left:591px;top:189px;" width="20" height="20" viewBox="0 0 20 20"><g stroke="#4caf50" stroke-width="1.3" stroke-linejoin="round"><path d="M1.5 5 L5.5 1 H11.5 V14.5 H1.5z" fill="#fff"/><path d="M1.5 5 H5.5 V1" fill="none"/><path d="M7.8 8.2 L11.5 4.5 H18.7 V18.3 H7.8z" fill="#fff"/><path d="M7.8 8.2 H11.5 V4.5" fill="none"/></g></svg>
<svg class="a" style="left:624px;top:192px;" width="14" height="14" viewBox="0 0 14 14"><path d="M2 2L12 12M12 2L2 12" stroke="#4caf50" stroke-width="3.2"/></svg>
<div class="a" style="left:694px;top:125px;width:104px;height:52px;background:#fff;border:1px solid #ddd;border-bottom:none;border-radius:6px 6px 0 0"></div>
<div class="a" style="left:797px;top:176px;width:746px;height:1px;background:#ddd"></div>
<div class="a tx" style="left:714.5px;top:143.4px;font-size:17px;color:#555;">Detaylar</div>
<div class="a tx" style="left:820.5px;top:143.2px;font-size:17.2px;color:#4caf50;">Eklentiler</div>
<div class="a tx" style="left:933.7px;top:143.4px;font-size:17px;color:#4caf50;transform:scaleX(.885);transform-origin:0 0">SEO</div>
<div class="a tx" style="left:694.8px;top:196.7px;font-size:14.5px;color:#555;">Resimler</div>
<div class="a" style="left:694px;top:216px;width:175px;height:174px;background:#959595"></div>
<svg class="a" style="left:694px;top:216px;" width="174" height="174" viewBox="0 0 174 174"><ellipse cx="104" cy="121" rx="58" ry="5" fill="#8c8c8c"/><path d="M45 78 H138 V116 Q92 124 45 116z" fill="#a8a8a8"/><rect x="45" y="69" width="93" height="12" fill="#a0a0a0"/><path d="M45 72.5H138M45 75.5H138M45 78.5H138" stroke="#969696" stroke-width="1"/><rect x="80" y="91" width="20" height="18" fill="#b3b3b3"/><text x="82" y="104" font-family="Liberation Serif" font-size="9" fill="#2b3a8a">N.</text><g transform="rotate(-33 66 89)"><ellipse cx="66" cy="94" rx="46" ry="25" fill="#7c7c7c"/><path d="M20 92 A46 25 0 0 0 112 92" fill="none" stroke="#999" stroke-width="1.2"/><ellipse cx="66" cy="88" rx="46" ry="25" fill="#8a8a8a"/><ellipse cx="68" cy="86" rx="37" ry="19" fill="#a2a2a2"/><ellipse cx="69" cy="85" rx="30" ry="15" fill="#b3b3b3"/><text x="52" y="91" font-family="Liberation Serif" font-style="italic" font-weight="bold" font-size="14" fill="#27338a">Nob</text></g></svg>
<div class="a tx" style="left:775.5px;top:283.3px;font-size:23px;color:#fff;font-weight:bold;">2</div>
<div class="a tx" style="left:733.8px;top:307.8px;font-size:13px;color:#fff;font-weight:bold;transform:scaleX(.925);transform-origin:0 0">resim(ler) seçildi</div>
<div class="a" style="left:874px;top:216px;width:43px;height:42px;background:#fff;border:1px solid #ccc"></div>
<div class="a" style="left:874px;top:257px;width:43px;height:42px;background:#fff;border:1px solid #ccc"></div>
<svg class="a" style="left:887px;top:228px;" width="16" height="16" viewBox="0 0 16 16"><path d="M0.6 15.4 L1.4 10.8 L10.6 1.6 L14.4 5.4 L5.2 14.6z" fill="#333"/><path d="M11.8 0.5 L12.6 -0.2 Q13.2 -0.6 13.8 0 L16 2.2 Q16.5 2.8 16 3.4 L15.3 4.2z" fill="#333"/><path d="M3 11.8 L11.2 3.6" stroke="#888" stroke-width="0.7"/><path d="M2.1 12.7 L3.3 13.9 L1.7 14.3z" fill="#fff"/></svg>
<svg class="a" style="left:889px;top:270px;" width="14" height="14" viewBox="0 0 14 14"><path d="M2.2 2.2L11.8 11.8M11.8 2.2L2.2 11.8" stroke="#333" stroke-width="3.2" stroke-linecap="round"/></svg>
<div class="a tx" style="left:954px;top:196.7px;font-size:14.5px;color:#555;">Öge İsmi</div>
<div class="a" style="left:954px;top:216px;width:248px;height:42px;background:#fff;border:1px solid #ccc"></div>
<div class="a tx" style="left:965.4px;top:230.0px;font-size:14.2px;color:#222;">Ürün 1</div>
<div class="a tx" style="left:954px;top:278.0px;font-size:14.3px;color:#555;">Fiyat (TRY)</div>
<div class="a" style="left:954px;top:297px;width:125px;height:43px;background:#fff;border:1px solid #ccc"></div>
<div class="a tx" style="left:965.4px;top:310.7px;font-size:14.5px;color:#222;">45</div>
<div class="a tx" style="left:1101px;top:277.8px;font-size:14.5px;color:#555;">İndirim (%)</div>
<div class="a" style="left:1101px;top:297px;width:100px;height:43px;background:#fff;border:1px solid #ccc"></div>
<div class="a tx" style="left:1112px;top:310.7px;font-size:14.5px;color:#222;">0</div>
<div class="a tx" style="left:694.6px;top:410.4px;font-size:14.5px;color:#555;">Ürün Türü</div>
<div class="a" style="left:694px;top:430px;width:223px;height:42px;background:#fff;border:1px solid #ccc"></div>
<div class="a" style="left:694px;top:471px;width:223px;height:2px;background:#ddd"></div>
<div class="a tx" style="left:705.7px;top:443.6px;font-size:14.5px;color:#222;">Krem</div>
<div class="a" style="left:847px;top:431px;width:26px;height:40px;background:#d4d4d4;border-left:1px solid #bbb"></div>
<div class="a" style="left:856px;top:450px;width:0px;height:0px;border-left:5px solid transparent;border-right:5px solid transparent;border-top:5px solid #333"></div>
<svg class="a" style="left:888px;top:442px;" width="16" height="16" viewBox="0 0 16 16"><path d="M0.6 15.4 L1.4 10.8 L10.6 1.6 L14.4 5.4 L5.2 14.6z" fill="#333"/><path d="M11.8 0.5 L12.6 -0.2 Q13.2 -0.6 13.8 0 L16 2.2 Q16.5 2.8 16 3.4 L15.3 4.2z" fill="#333"/><path d="M3 11.8 L11.2 3.6" stroke="#888" stroke-width="0.7"/><path d="M2.1 12.7 L3.3 13.9 L1.7 14.3z" fill="#fff"/></svg>
<div class="a" style="left:694px;top:491px;width:507px;height:207px;background:#f4f4f4;border:1px solid #ddd"></div>
<div class="a tx" style="left:915.4px;top:531.3px;font-size:15px;color:#555;">0 ml</div>
<div class="a" style="left:714px;top:569px;width:467px;height:1px;background:#ddd"></div>
<div class="a" style="left:714px;top:599px;width:185px;height:42px;background:#fff;border:1px solid #ccc"></div>
<div class="a tx" style="left:725px;top:613.3px;font-size:15px;color:#555;">Turuncu</div>
<div class="a" style="left:898px;top:599px;width:29px;height:42px;background:#fff;border:1px solid #ccc"></div>
<div class="a" style="left:914px;top:618px;width:0px;height:0px;border-left:3px solid transparent;border-right:3px solid transparent;border-top:3px solid #333"></div>
<div class="a" style="left:714px;top:650px;width:467px;height:1px;background:#ddd"></div>
<svg class="a" style="left:720px;top:661px;" width="14" height="14" viewBox="0 0 14 14"><path d="M5.3 0h3.4v5.3H14v3.4H8.7V14H5.3V8.7H0V5.3h5.3z" fill="#337ab7"/></svg>
<div class="a tx" style="left:743px;top:662.5px;font-size:14.2px;color:#337ab7;">Seçenek Ekle</div>
<div class="a tx" style="left:837px;top:661.8px;font-size:15px;color:#999;">(Krem)</div>
<div class="a" style="left:697px;top:478px;width:220px;height:144px;background:#fff;border-right:1px solid #ccc;box-shadow:0 6px 12px rgba(0,0,0,.175)"></div>
<div class="a" style="left:698px;top:517px;width:218px;height:32px;background:#51ae56"></div>
<div class="a tx" style="left:720.5px;top:492.2px;font-size:17px;color:#333;">Sabun</div>
<div class="a tx" style="left:720.5px;top:524.6px;font-size:17px;color:#fff;">Krem</div>
<div class="a tx" style="left:720.5px;top:557.1px;font-size:17px;color:#333;">Koku Giderici</div>
<div class="a tx" style="left:720.5px;top:590.1px;font-size:17px;color:#333;">Örnek Ürün Türü</div>
<svg class="a" style="left:858px;top:464.5px;" width="25" height="32" viewBox="0 0 26 34"><path d="M6.5 2.5 Q6.5 0.8 8.2 0.8 Q9.8 0.8 9.8 2.5 V12 Q10.5 11 12 11.3 Q13.3 11.6 13.5 13 Q14.5 12 16 12.4 Q17.2 12.8 17.4 14 Q18.5 13.2 19.8 13.8 Q21 14.4 21 16 V24 Q21 28 18.5 31 Q16.5 33 12.5 33 Q8.5 33 6.5 30 L1.2 22 Q0.3 20.5 1.5 19.5 Q2.8 18.6 4.2 19.8 L6.5 22z" fill="#fff" stroke="#111" stroke-width="1.3"/></svg>
<div class="a" style="left:694px;top:476px;width:229px;height:147px;border:4px solid #f00;border-radius:2px"></div>
<div class="a" style="left:842px;top:427px;width:35px;height:49px;border:4px solid #f00;border-radius:3px"></div>
<div class="a tx" style="left:694.6px;top:717.5px;font-size:14.5px;color:#555;">Açıklama</div>
<div class="a" style="left:694px;top:737px;width:507px;height:200px;background:#fff;border:1px solid #ccc"></div>
<div class="a tx" style="left:710.7px;top:747.7px;font-size:18px;color:#222;transform:scaleX(.972);transform-origin:0 0">Müşterileriniz için faydalı olacak ürün açıklamanızı ekleyin.</div>
<div class="a tx" style="left:710.7px;top:768.7px;font-size:18px;color:#222;transform:scaleX(.972);transform-origin:0 0">Ürününüzün, müşterilerin onu satın almak istemesini</div>
<div class="a tx" style="left:710.7px;top:789.7px;font-size:18px;color:#222;transform:scaleX(.972);transform-origin:0 0">sağlayacak özel özelliklerini ekleyin. Stil sekmesindeki</div>
<div class="a tx" style="left:710.7px;top:810.7px;font-size:18px;color:#222;transform:scaleX(.972);transform-origin:0 0">Mağaza özelliklerinde kendi metninizi yazın ve stilini</div>
<div class="a tx" style="left:710.7px;top:831.7px;font-size:18px;color:#222;transform:scaleX(.972);transform-origin:0 0">belirleyin.</div>
<div class="a" style="left:1131px;top:912px;width:40px;height:20px;background:#3a3a3a;border-radius:10px"></div>
<div class="a" style="left:1238px;top:197px;width:1px;height:720px;background:#ddd"></div>
<div class="a tx" style="left:1276.7px;top:196.6px;font-size:14.5px;color:#555;">SKU</div>
<svg class="a" style="left:1314px;top:195px;" width="15" height="15" viewBox="0 0 15 15"><circle cx="7.5" cy="7.5" r="7.5" fill="#bbb"/><text x="7.5" y="12" text-anchor="middle" font-family="Liberation Sans" font-weight="bold" font-size="12" fill="#fff">?</text></svg>
<div class="a" style="left:1277px;top:216px;width:267px;height:42px;background:#fff;border:1px solid #ccc"></div>
<div class="a tx" style="left:1276.7px;top:277.7px;font-size:14.5px;color:#555;">Sayı</div>
<svg class="a" style="left:1314px;top:276px;" width="15" height="15" viewBox="0 0 15 15"><circle cx="7.5" cy="7.5" r="7.5" fill="#bbb"/><text x="7.5" y="12" text-anchor="middle" font-family="Liberation Sans" font-weight="bold" font-size="12" fill="#fff">?</text></svg>
<div class="a" style="left:1277px;top:297px;width:267px;height:43px;background:#fff;border:1px solid #ccc"></div>
<div class="a tx" style="left:1287.6px;top:311.1px;font-size:14.5px;color:#222;">0</div>
<div class="a tx" style="left:1276.7px;top:358.7px;font-size:14.5px;color:#555;">Ağırlık</div>
<div class="a" style="left:1277px;top:378px;width:267px;height:43px;background:#fff;border:1px solid #ccc"></div>
<div class="a tx" style="left:1287.6px;top:392.1px;font-size:14.5px;color:#222;">0</div>
<svg class="a" style="left:1277px;top:442px;" width="15" height="15" viewBox="0 0 15 15"><rect x="0" y="0" width="15" height="15" rx="2" fill="#1a73e8"/><path d="M3.2 7.6 L6.2 10.6 L11.8 4.6" fill="none" stroke="#fff" stroke-width="2"/></svg>
<div class="a tx" style="left:1300.7px;top:442.9px;font-size:15px;color:#333;">Kargo gerektirir</div>
<div class="a tx" style="left:1276.7px;top:490.0px;font-size:15px;color:#555;">Kategoriler (filtre)</div>
<div class="a" style="left:1277px;top:510px;width:267px;height:155px;background:#f4f4f4;border:1px solid #ddd"></div>
<svg class="a" style="left:1296px;top:532px;" width="15" height="15" viewBox="0 0 15 15"><rect x="0" y="0" width="15" height="15" rx="2" fill="#1a73e8"/><path d="M3.2 7.6 L6.2 10.6 L11.8 4.6" fill="none" stroke="#fff" stroke-width="2"/></svg>
<div class="a tx" style="left:1320.4px;top:532.7px;font-size:15px;color:#333;">Yüz</div>
<svg class="a" style="left:1296px;top:564px;" width="15" height="15" viewBox="0 0 15 15"><rect x="0.75" y="0.75" width="13.5" height="13.5" rx="2" fill="#fff" stroke="#666" stroke-width="1.2"/></svg>
<div class="a tx" style="left:1320.4px;top:564.7px;font-size:14.5px;color:#333;">Cilt</div>
<svg class="a" style="left:1296px;top:596px;" width="15" height="15" viewBox="0 0 15 15"><rect x="0.75" y="0.75" width="13.5" height="13.5" rx="2" fill="#fff" stroke="#666" stroke-width="1.2"/></svg>
<div class="a tx" style="left:1320.4px;top:597.1px;font-size:14.5px;color:#333;">Eller</div>
<svg class="a" style="left:1296px;top:628px;" width="15" height="15" viewBox="0 0 15 15"><rect x="0.75" y="0.75" width="13.5" height="13.5" rx="2" fill="#fff" stroke="#666" stroke-width="1.2"/></svg>
<div class="a tx" style="left:1320.4px;top:628.5px;font-size:14.5px;color:#333;">Yeni Gelenler</div>
<div class="a" style="left:1497px;top:530px;width:28px;height:27px;background:#fff;border:1px solid #ccc"></div>
<svg class="a" style="left:1504px;top:536px;" width="14" height="14" viewBox="0 0 16 16"><path d="M0.6 15.4 L1.4 10.8 L10.6 1.6 L14.4 5.4 L5.2 14.6z" fill="#333"/><path d="M11.8 0.5 L12.6 -0.2 Q13.2 -0.6 13.8 0 L16 2.2 Q16.5 2.8 16 3.4 L15.3 4.2z" fill="#333"/><path d="M3 11.8 L11.2 3.6" stroke="#888" stroke-width="0.7"/><path d="M2.1 12.7 L3.3 13.9 L1.7 14.3z" fill="#fff"/></svg>
<div class="a tx" style="left:1276.7px;top:686.0px;font-size:14.8px;color:#999;">ID: 1</div>
<div class="a tx" style="left:1276.7px;top:707.0px;font-size:14.8px;color:#999;">Oluşturuldu: 2017-11-07 14:16</div>
<div class="a tx" style="left:1276.7px;top:729.0px;font-size:14.8px;color:#999;">Değiştirildi: 2025-12-10 03:03</div>
<svg class="a" style="left:1277px;top:769px;" width="15" height="15" viewBox="0 0 15 15"><rect x="0.75" y="0.75" width="13.5" height="13.5" rx="2" fill="#fff" stroke="#666" stroke-width="1.2"/></svg>
<div class="a tx" style="left:1300.5px;top:770.1px;font-size:14.5px;color:#333;">Saklı</div>
</body></html>
